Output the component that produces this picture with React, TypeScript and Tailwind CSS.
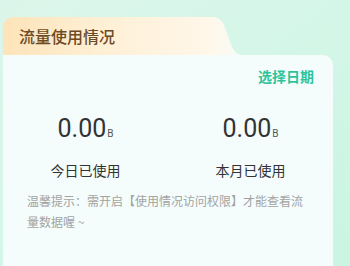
import React from "react";

const cjk = "font-['Noto_Sans_CJK_SC','Noto_Sans',sans-serif]";

function StatCell({ value, unit, label }: { value: string; unit: string; label: string }) {
  return (
    <div className="flex flex-col items-center">
      <div className="flex items-baseline text-[#333333]">
        <span className="font-['Roboto','Noto_Sans',sans-serif] text-[25px] leading-[30px]">{value}</span>
        <span className="ml-[1px] font-['Roboto',sans-serif] text-[10px] text-[#555555]">{unit}</span>
      </div>
      <p className={`${cjk} mt-[16px] text-[14px] leading-[20px] text-[#333333]`}>{label}</p>
    </div>
  );
}

export default function App() {
  return (
    <div className="h-[266px] w-[350px] overflow-hidden bg-gradient-to-br from-[#dcf5ea] via-[#d4f6e8] to-[#caf5e2] pl-[3px] pt-[17px]">
      {/* tab */}
      <div className="flex h-[38px] w-[330px]">
        <div className="flex w-[207px] items-center rounded-tl-[10px] bg-gradient-to-r from-[#fde4b9] via-[#fff0d6] to-[#fff7ea] pl-[16px]">
          <h3 className={`${cjk} text-[16px] font-medium leading-none text-[#6d4a26]`}>流量使用情况</h3>
        </div>
        <svg width="32" height="38" viewBox="0 0 32 38" aria-hidden>
          <defs>
            <linearGradient id="shoulder" x1="0" y1="0" x2="1" y2="0">
              <stop offset="0" stopColor="#fff7ea" />
              <stop offset="1" stopColor="#f6fcf8" />
            </linearGradient>
          </defs>
          <path d="M0 0 L3 0 Q10 0 14 8 L22 30 Q26 38 32 38 L0 38 Z" fill="url(#shoulder)" />
        </svg>
      </div>

      {/* card */}
      <div className="h-[240px] w-[330px] rounded-tr-[10px] bg-[#f4fdfc]">
        <div className="flex justify-end pr-[19px] pt-[11px]">
          <button type="button" className={`${cjk} text-[14px] font-bold leading-[20px] text-[#2ec39b]`}>
            选择日期
          </button>
        </div>

        <div className="mt-[28px] grid grid-cols-2">
          <StatCell value="0.00" unit="B" label="今日已使用" />
          <StatCell value="0.00" unit="B" label="本月已使用" />
        </div>

        <p className={`${cjk} mt-[10px] pl-[24px] pr-[24px] text-[12px] leading-[21px] text-[#a3a3a3]`}>
          温馨提示：需开启【使用情况访问权限】才能查看流量数据喔 ~
        </p>
      </div>
    </div>
  );
}
